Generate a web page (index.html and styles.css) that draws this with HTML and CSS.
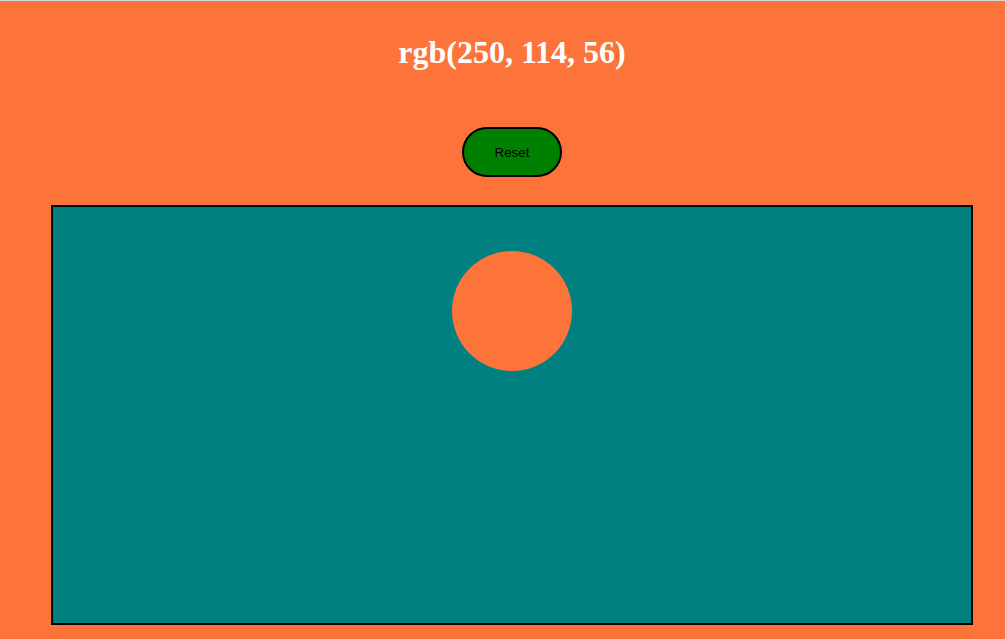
FILE: index.html
```html
<!DOCTYPE html>
<html>
<head>
<meta charset="utf-8">
<link rel="stylesheet" href="styles.css">
</head>
<body>
<div class="page">
  <h1 class="title">rgb(250, 114, 56)</h1>
  <div class="controls">
    <button class="reset">Reset</button>
  </div>
  <div class="stage">
    <div class="ball"></div>
  </div>
</div>
</body>
</html>
```
FILE: styles.css
```css
html, body {
  margin: 0;
  padding: 0;
  background: #fd743a;
  overflow: hidden;
}
.page {
  width: 1024px;
  height: 639px;
  box-sizing: border-box;
  border-top: 1px solid #d8d8d8;
}
.title {
  margin: 0;
  padding-top: 33px;
  line-height: 37px;
  font-family: "Liberation Serif", "Times New Roman", serif;
  font-size: 32px;
  font-weight: bold;
  color: #ffffff;
  text-align: center;
}
.controls {
  display: flex;
  justify-content: center;
  margin-top: 56px;
}
.reset {
  width: 100px;
  height: 50px;
  border: 2px solid #000;
  border-radius: 25px;
  background: #008000;
  color: #000;
  font-family: "Liberation Sans", Arial, sans-serif;
  font-size: 13.33px;
  padding: 0;
}
.stage {
  margin: 28px 51px 0;
  height: 416px;
  border: 2px solid #000;
  background: #008080;
  display: flex;
  justify-content: center;
  align-items: flex-start;
  padding-top: 44px;
  box-sizing: content-box;
  height: 372px;
}
.ball {
  width: 120px;
  height: 120px;
  border-radius: 50%;
  background: #fd743a;
}
```
